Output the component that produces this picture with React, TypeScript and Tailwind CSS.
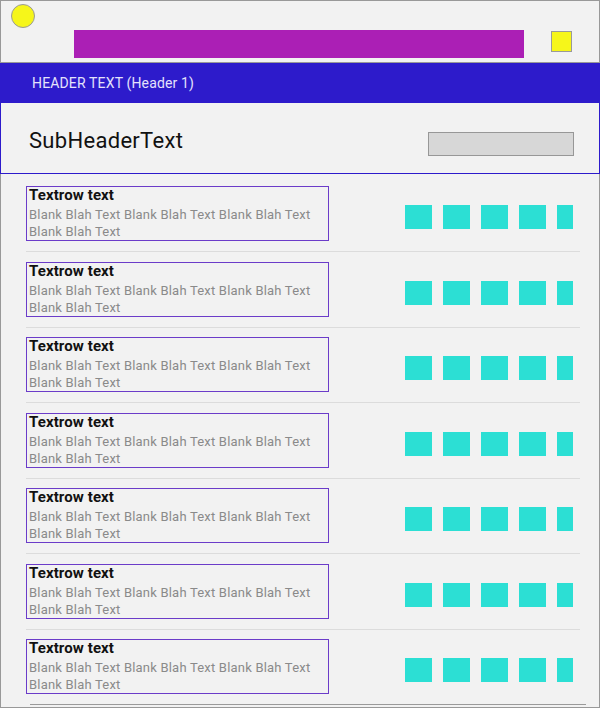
export default function App() {
  const rows = [0, 1, 2, 3, 4, 5, 6];

  return (
    <div className="w-[604px] h-[716px] bg-white" style={{ fontFamily: 'Roboto, "Liberation Sans", sans-serif' }}>
      <div className="w-[600px] h-[708px] flex flex-col bg-[#f2f2f2]">
        {/* top bar */}
        <div className="relative h-[63px] border border-[#999999] shrink-0">
          <div className="absolute left-[10px] top-[3px] w-[24px] h-[24px] rounded-full bg-[#f6f61a] border border-[#9a9a9a]" />
          <div className="absolute left-[73px] top-[29px] w-[450px] h-[28px] bg-[#ab1fb5]" />
          <div className="absolute left-[550px] top-[30px] w-[21px] h-[21px] bg-[#f6f61a] border border-[#9a9a9a]" />
        </div>

        {/* header */}
        <div className="h-[40px] shrink-0 bg-[#2d1bcb] flex items-center pl-[32px]">
          <span className="text-[14px] tracking-[0.15px] text-[#e4e2fb] leading-none">HEADER TEXT (Header 1)</span>
        </div>

        {/* sub header */}
        <div className="h-[71px] shrink-0 border-x border-b border-[#2d1bcb] flex items-center pl-[28px] pr-[25px]">
          <span className="text-[22px] tracking-[0.3px] text-[#111111] leading-none mt-[5px]">SubHeaderText</span>
          <div className="ml-auto w-[146px] h-[24px] bg-[#d7d7d7] border border-[#979797] mt-[11px]" />
        </div>

        {/* rows */}
        <div className="flex-1 border-x border-b border-[#999999] pt-[2.5px] flex flex-col">
          {rows.map((i) => (
            <div
              key={i}
              className={
                i < 6
                  ? 'ml-[25px] mr-[19px] pt-[9.5px] pb-[10px] border-b border-[#dcdcdc] flex'
                  : 'ml-[25px] mr-[19px] pt-[9.5px] pb-[10px] flex'
              }
            >
              <div className="w-[303px] h-[55px] border border-[#6b3cc9] pl-[2px]">
                <div className="text-[15px] tracking-[0.1px] font-bold leading-[16px] text-[#111111]">Textrow text</div>
                <div className="mt-[3px] text-[13px] tracking-[0.2px] leading-[17px] text-[#8a8a8a]">
                  Blank Blah Text Blank Blah Text Blank Blah Text
                  <br />
                  Blank Blah Text
                </div>
              </div>
              <div className="ml-[76px] mt-[19px] w-[168px] h-[24px] overflow-hidden flex gap-[11px]">
                <div className="w-[27px] h-[24px] shrink-0 bg-[#2cdfd4]" />
                <div className="w-[27px] h-[24px] shrink-0 bg-[#2cdfd4]" />
                <div className="w-[27px] h-[24px] shrink-0 bg-[#2cdfd4]" />
                <div className="w-[27px] h-[24px] shrink-0 bg-[#2cdfd4]" />
                <div className="w-[27px] h-[24px] shrink-0 bg-[#2cdfd4]" />
              </div>
            </div>
          ))}
          <div className="ml-[29px] w-[556px] h-px bg-[#9a9a9a]" />
        </div>
      </div>
    </div>
  );
}
